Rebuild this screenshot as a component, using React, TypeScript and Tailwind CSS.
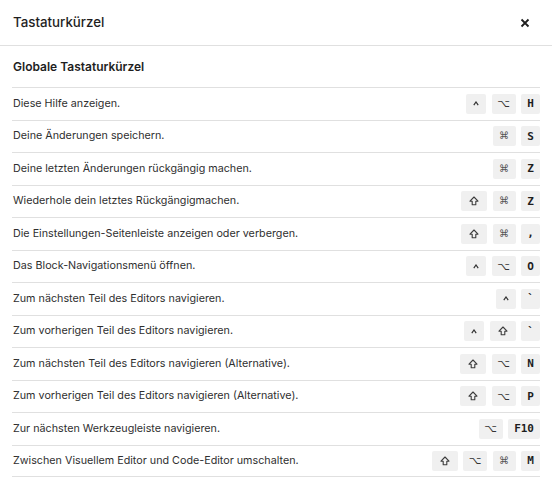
import React from "react";

type Row = { label: string; keys: string[] };

const rows: Row[] = [
  { label: "Diese Hilfe anzeigen.", keys: ["^", "⌥", "H"] },
  { label: "Deine Änderungen speichern.", keys: ["⌘", "S"] },
  { label: "Deine letzten Änderungen rückgängig machen.", keys: ["⌘", "Z"] },
  { label: "Wiederhole dein letztes Rückgängigmachen.", keys: ["⇧", "⌘", "Z"] },
  { label: "Die Einstellungen-Seitenleiste anzeigen oder verbergen.", keys: ["⇧", "⌘", ","] },
  { label: "Das Block-Navigationsmenü öffnen.", keys: ["^", "⌥", "O"] },
  { label: "Zum nächsten Teil des Editors navigieren.", keys: ["^", "`"] },
  { label: "Zum vorherigen Teil des Editors navigieren.", keys: ["^", "⇧", "`"] },
  { label: "Zum nächsten Teil des Editors navigieren (Alternative).", keys: ["⇧", "⌥", "N"] },
  { label: "Zum vorherigen Teil des Editors navigieren (Alternative).", keys: ["⇧", "⌥", "P"] },
  { label: "Zur nächsten Werkzeugleiste navigieren.", keys: ["⌥", "F10"] },
  { label: "Zwischen Visuellem Editor und Code-Editor umschalten.", keys: ["⇧", "⌥", "⌘", "M"] },
];

function Shift() {
  return (
    <svg width="10" height="10" viewBox="0 0 10 10" fill="none">
      <path d="M5 1 L9 5.2 H6.8 V8.8 H3.2 V5.2 H1 Z" stroke="#3c3c3c" strokeWidth="1.1" strokeLinejoin="round" />
    </svg>
  );
}

function Caret() {
  return (
    <svg width="6" height="5" viewBox="0 0 6 5" fill="none">
      <path d="M0.8 4.2 L3 1 L5.2 4.2" stroke="#333" strokeWidth="1.2" strokeLinejoin="miter" />
    </svg>
  );
}

const base =
  "flex h-[20px] items-center justify-center rounded-[2px] bg-[#f0f0f0] text-[11px] leading-none text-[#1e1e1e]";

function Key({ k }: { k: string }) {
  if (k === "⇧")
    return (
      <kbd className={`${base} w-[26px]`}>
        <Shift />
      </kbd>
    );
  if (k === "⌘")
    return (
      <kbd className={`${base} w-[23px]`} style={{ fontFamily: "'DejaVu Sans', sans-serif" }}>
        <span className="text-[10px] text-[#555]">⌘</span>
      </kbd>
    );
  if (k === "⌥")
    return (
      <kbd className={`${base} w-[24px]`} style={{ fontFamily: "'DejaVu Sans', sans-serif" }}>
        <span className="text-[11px] text-[#333]">⌥</span>
      </kbd>
    );
  if (k === "^")
    return (
      <kbd className={`${base} w-[20px]`}>
        <Caret />
      </kbd>
    );
  return (
    <kbd className={`${base} min-w-[19px] px-[6px] font-bold`} style={{ fontFamily: "'DejaVu Sans Mono', monospace" }}>
      {k}
    </kbd>
  );
}

export default function App() {
  return (
    <div className="h-[487px] w-[552px] overflow-hidden bg-white text-[#1e1e1e]" style={{ fontFamily: "Inter, 'Noto Sans', sans-serif" }}>
      <div className="flex h-[46px] items-center justify-between border-b border-[#e0e0e0] pl-[13px] pr-[22px]">
        <h1 className="text-[13.3px] font-medium text-[#1e1e1e]">Tastaturkürzel</h1>
        <svg width="10" height="10" viewBox="0 0 10 10">
          <path d="M1.5 1.5 L8.5 8.5 M8.5 1.5 L1.5 8.5" stroke="#1e1e1e" strokeWidth="1.8" />
        </svg>
      </div>
      <div className="px-3">
        <h2 className="flex h-[41px] items-center pl-[1px] text-[12px] font-semibold text-[#1e1e1e]">Globale Tastaturkürzel</h2>
        <ul>
          {rows.map((r) => (
            <li key={r.label} className="flex h-[32.5px] items-center justify-between border-t border-[#e0e0e0] last:border-b">
              <span className="pl-[1px] text-[10.75px] text-[#2f2f2f]">{r.label}</span>
              <span className="flex gap-[5.5px]">
                {r.keys.map((k, i) => (
                  <Key key={i} k={k} />
                ))}
              </span>
            </li>
          ))}
        </ul>
      </div>
    </div>
  );
}
